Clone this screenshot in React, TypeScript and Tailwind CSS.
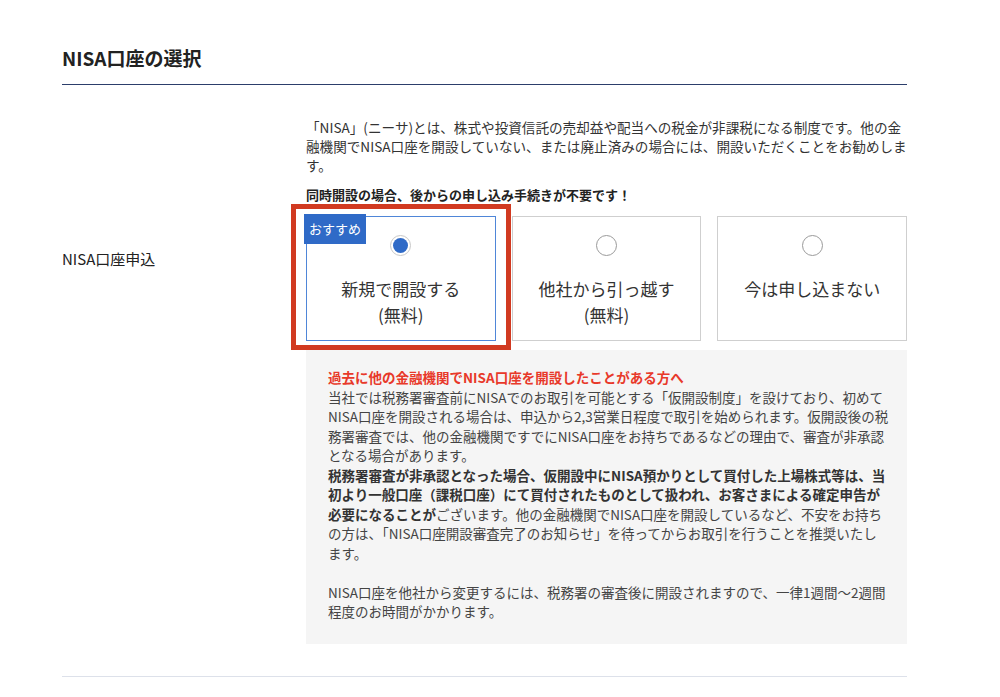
import React from "react";

const Card = ({ label, sub, selected, rec }: { label: string; sub?: string; selected?: boolean; rec?: boolean }) => (
  <div className="relative">
    {rec && (
      <>
        <div className="absolute -left-[15px] -top-[12px] -right-[15px] -bottom-[9px] border-[5px] border-[#d13a21] pointer-events-none" />
        <div className="absolute -left-[2px] -top-[2px] bg-[#2f6ac7] text-white text-[13px] leading-[30px] px-[5px]">おすすめ</div>
      </>
    )}
    <div className={`h-[125px] border ${selected ? "border-[#4f86d8]" : "border-[#cfcfcf]"} bg-white flex flex-col items-center pt-[18px]`}>
      <div className={`w-[21px] h-[21px] rounded-full border ${selected ? "border-[#c8c8c8]" : "border-[#9a9a9a]"} flex items-center justify-center`}>
        {selected && <div className="w-[15px] h-[15px] rounded-full bg-[#2f6ac7]" />}
      </div>
      <div className="mt-[20px] text-[17px] leading-[26px] text-[#333] text-center">
        {label}
        {sub && <div>{sub}</div>}
      </div>
    </div>
  </div>
);

export default function App() {
  return (
    <div className="w-[1000px] h-[697px] bg-white text-[#222]" style={{ fontFamily: '"Noto Sans CJK JP", "Noto Sans", sans-serif' }}>
      <div className="mx-[62px] w-[845px]">
        <h1 className="pt-[44px] h-[85px] text-[19px] font-bold leading-[28px] border-b border-[#2c3e6b]">NISA口座の選択</h1>
        <div className="flex border-b border-[#dde1ea] pb-[32px]">
          <div className="w-[244px] pt-[163px] text-[15px]">NISA口座申込</div>
          <div className="flex-1 pt-[33px]">
            <p className="text-[13.6px] leading-[19px] text-[#333]">「NISA」(ニーサ)とは、株式や投資信託の売却益や配当への税金が非課税になる制度です。他の金融機関でNISA口座を開設していない、または廃止済みの場合には、開設いただくことをお勧めします。</p>
            <p className="mt-[10px] text-[13px] font-bold leading-[19px]">同時開設の場合、後からの申し込み手続きが不要です！</p>
            <div className="grid grid-cols-3 gap-[16px] mt-[12px]">
              <Card label="新規で開設する" sub="(無料)" selected rec />
              <Card label="他社から引っ越す" sub="(無料)" />
              <Card label="今は申し込まない" />
            </div>
            <div className="mt-[9px] bg-[#f5f5f5] pl-[22px] pr-[18px] pt-[18px] pb-[22px] text-[13.5px] leading-[19.5px] text-[#444]">
              <p className="font-bold text-[#e8392a]">過去に他の金融機関でNISA口座を開設したことがある方へ</p>
              <p>当社では税務署審査前にNISAでのお取引を可能とする「仮開設制度」を設けており、初めてNISA口座を開設される場合は、申込から2,3営業日程度で取引を始められます。仮開設後の税務署審査では、他の金融機関ですでにNISA口座をお持ちであるなどの理由で、審査が非承認となる場合があります。</p>
              <p><b className="text-[#333]">税務署審査が非承認となった場合、仮開設中にNISA預かりとして買付した上場株式等は、当初より一般口座（課税口座）にて買付されたものとして扱われ、お客さまによる確定申告が必要になることが</b>ございます。他の金融機関でNISA口座を開設しているなど、不安をお持ちの方は、「NISA口座開設審査完了のお知らせ」を待ってからお取引を行うことを推奨いたします。</p>
              <p className="mt-[19.5px]">NISA口座を他社から変更するには、税務署の審査後に開設されますので、一律1週間〜2週間程度のお時間がかかります。</p>
            </div>
          </div>
        </div>
      </div>
    </div>
  );
}
